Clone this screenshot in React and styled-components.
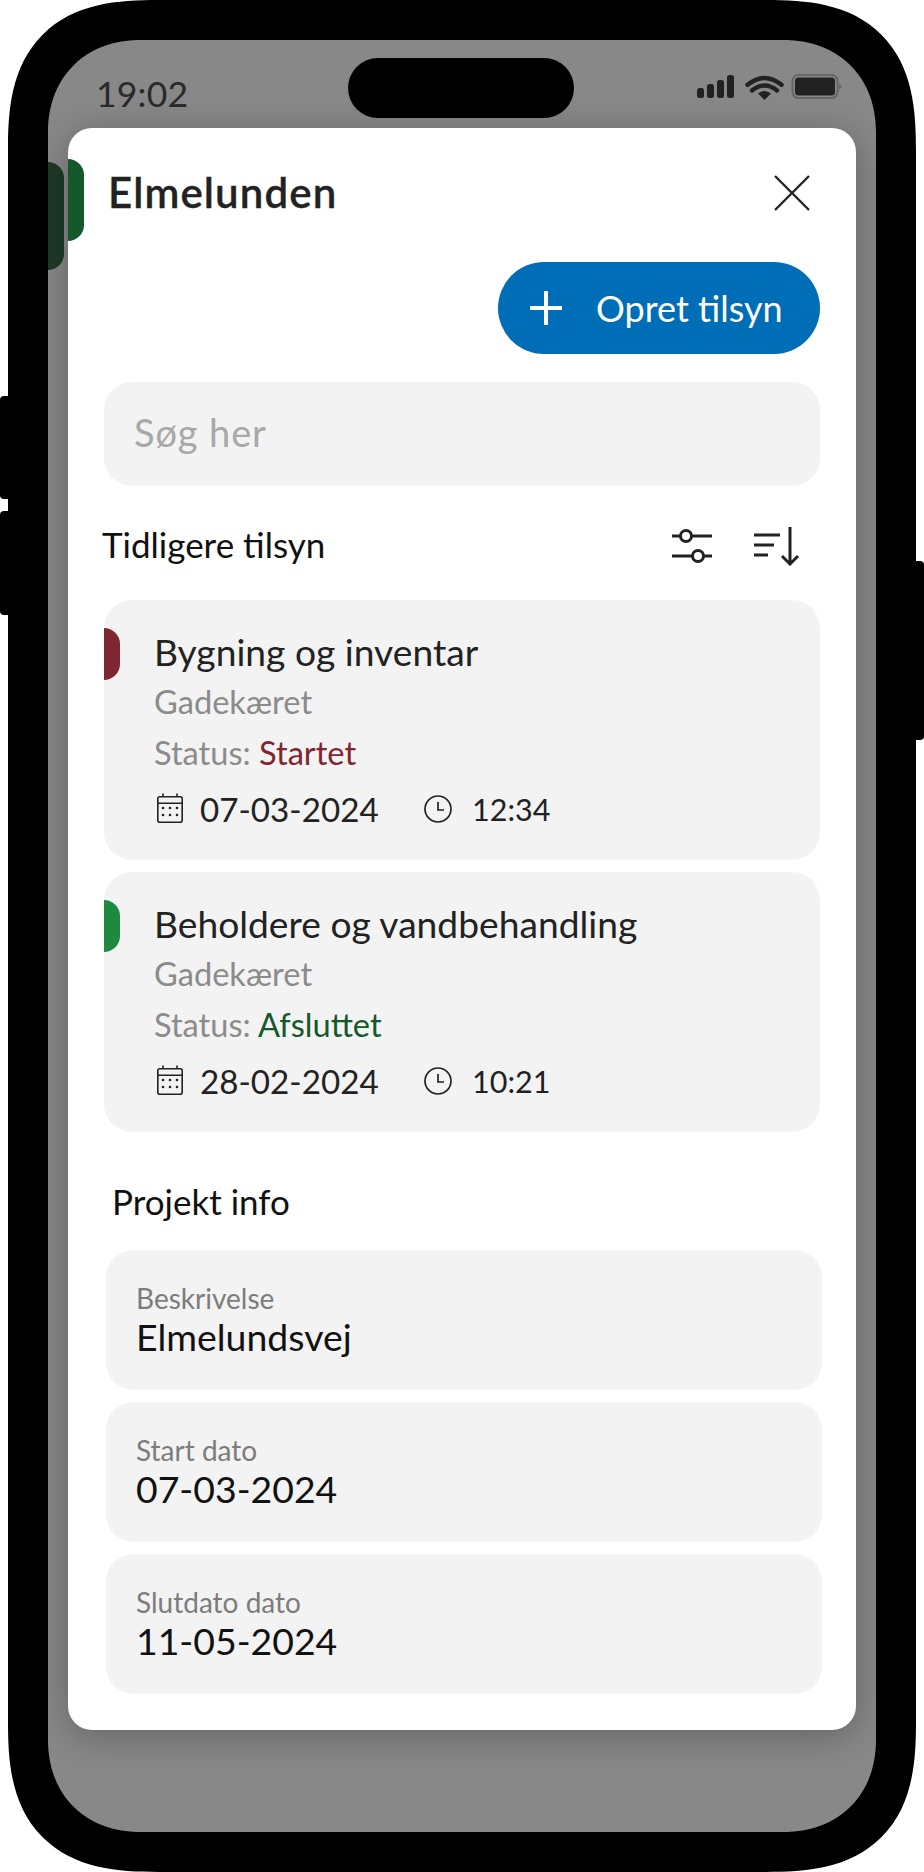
import React from "react";
import styled, { createGlobalStyle } from "styled-components";

const Global = createGlobalStyle`
  html, body { margin: 0; padding: 0; background: #fff; }
  body { font-family: "Lato", "Open Sans", sans-serif; }
  * { box-sizing: border-box; }
`;

const Stage = styled.div`
  position: relative;
  width: 924px;
  height: 1872px;
  padding: 0 8px;
  overflow: hidden;
`;
const SideKey = styled.div`
  position: absolute;
  top: ${(p) => p.$top}px;
  height: ${(p) => p.$h}px;
  width: 12px;
  background: #000;
  border-radius: 4px;
  ${(p) => (p.$right ? "right: 0;" : "left: 0;")}
`;
const Phone = styled.div`
  width: 908px;
  height: 1872px;
  background: #000;
  border-radius: 150px;
  corner-shape: superellipse(1.4);
  padding: 40px;
`;
const Screen = styled.div`
  position: relative;
  width: 828px;
  height: 1792px;
  background: #888888;
  border-radius: 92px;
  corner-shape: superellipse(1.1);
  padding: 0 20px;
  display: flex;
  flex-direction: column;
`;
const StatusBar = styled.div`
  height: 88px;
  flex: none;
  display: flex;
  align-items: flex-start;
  justify-content: space-between;
  padding: 34px 14px 0 28px;
`;
const Clock = styled.div`
  font-size: 35.5px;
  line-height: 40px;
  color: #2a2a2a;
  letter-spacing: 0.2px;
`;
const Island = styled.div`
  position: absolute;
  left: 300px;
  top: 18px;
  width: 226px;
  height: 60px;
  border-radius: 30px;
  background: #000;
`;
const StatusIcons = styled.svg`
  display: block;
`;
const BackTab = styled.div`
  position: absolute;
  left: 0;
  top: 122px;
  width: 16px;
  height: 108px;
  background: #1c3a25;
  border-radius: 0 16px 16px 0;
`;
const Sheet = styled.div`
  position: relative;
  width: 788px;
  height: 1602px;
  background: #fff;
  border-radius: 24px;
  padding: 0 36px;
  box-shadow: 0 6px 36px rgba(0, 0, 0, 0.28);
`;
const SheetTab = styled.div`
  position: absolute;
  left: 0;
  top: 31px;
  width: 16px;
  height: 82px;
  background: #14582c;
  border-radius: 0 16px 16px 0;
`;
const Header = styled.div`
  height: 134px;
  display: flex;
  align-items: flex-start;
  justify-content: space-between;
  padding: 38px 9px 0 4px;
`;
const Title = styled.h1`
  margin: 0;
  font-size: 42px;
  line-height: 52px;
  font-weight: 600;
  color: #222;
  letter-spacing: 1.1px;
  -webkit-text-stroke: 0.3px #222;
`;
const CloseBtn = styled.svg`
  display: block;
  margin-top: 8px;
`;
const ActionRow = styled.div`
  display: flex;
  justify-content: flex-end;
`;
const CreateBtn = styled.button`
  width: 322px;
  height: 92px;
  border: 0;
  border-radius: 46px;
  background: #006eb7;
  color: #fff;
  display: flex;
  align-items: center;
  gap: 34px;
  padding: 0 0 0 32px;
  font-family: inherit;
  font-size: 36px;
`;
const Search = styled.div`
  margin-top: 28px;
  height: 104px;
  border-radius: 28px;
  background: #f3f3f3;
  display: flex;
  align-items: center;
  padding: 0 0 4px 30px;
  font-size: 38px;
  letter-spacing: 0.9px;
  color: #a8a8a8;
`;
const SectionRow = styled.div`
  height: 114px;
  display: flex;
  align-items: center;
  justify-content: space-between;
  padding: 6px 20px 0 0;
  margin-left: -2px;
`;
const SectionTitle = styled.h2`
  margin: 0 0 4px;
  font-size: 35px;
  font-weight: 400;
  color: #111;
`;
const ToolIcons = styled.div`
  display: flex;
  align-items: center;
  gap: 41px;
`;
const CardList = styled.div`
  display: flex;
  flex-direction: column;
  gap: 12px;
`;
const Card = styled.div`
  position: relative;
  height: 260px;
  border-radius: 28px;
  background: #f3f3f3;
  padding: 27px 0 0 50px;
`;
const Marker = styled.span`
  position: absolute;
  left: 0;
  top: 28px;
  width: 16px;
  height: 52px;
  background: ${(p) => p.$color};
  border-radius: 0 16px 16px 0;
`;
const CardTitle = styled.div`
  font-size: 37.2px;
  line-height: 50px;
  color: #222;
`;
const CardSub = styled.div`
  font-size: 32.6px;
  line-height: 50px;
  color: #8b8b8b;
`;
const StatusLine = styled(CardSub)`
  margin-top: 1px;
`;
const Status = styled.span`
  color: ${(p) => p.$color};
`;
const MetaRow = styled.div`
  display: flex;
  align-items: center;
  font-size: 33.2px;
  line-height: 60px;
  color: #222;
  margin: 1px 0 0 3px;
`;
const DateText = styled.span`
  margin-left: 17px;
  width: 224px;
`;
const TimeText = styled.span`
  margin-left: 20px;
  font-size: 30.5px;
`;
const ProjectTitle = styled.h2`
  margin: 0;
  height: 118px;
  padding: 45px 0 0 8px;
  font-size: 35px;
  line-height: 48px;
  font-weight: 400;
  color: #111;
`;
const InfoList = styled.div`
  display: flex;
  flex-direction: column;
  gap: 12px;
  margin: 0 -2px 0 2px;
`;
const InfoCard = styled.div`
  height: 140px;
  border-radius: 28px;
  background: #f3f3f3;
  padding: 33px 0 0 30px;
`;
const InfoLabel = styled.div`
  font-size: 28px;
  line-height: 30px;
  color: #7c7c7c;
`;
const InfoValue = styled.div`
  font-size: 37.4px;
  line-height: 48px;
  color: #111;
`;

const StatusGlyphs = () => (
  <StatusIcons width="145" height="28" viewBox="0 0 145 28">
    <g fill="#222">
      <rect x="0" y="14" width="7" height="10" rx="2.5" />
      <rect x="10" y="10" width="7" height="14" rx="2.5" />
      <rect x="20" y="6" width="7" height="18" rx="2.5" />
      <rect x="30" y="1" width="7" height="23" rx="2.5" />
      <path d="M67.5 26 L61 19.5 Q67.5 14.5 74 19.5 Z" />
    </g>
    <path d="M55 14.5 Q67.5 4.5 80 14.5 M50.5 8.8 Q67.5 -5 84.5 8.8" transform="translate(0 2)" fill="none" stroke="#222" strokeWidth="4.4" strokeLinecap="round" />
    <rect x="95.5" y="1" width="45" height="23" rx="6" fill="none" stroke="#666" strokeWidth="2" />
    <rect x="98" y="3.5" width="40" height="18" rx="3.5" fill="#222" />
    <path d="M142 9 L145 12.5 L142 16 Z" fill="#666" />
  </StatusIcons>
);

const CalendarIcon = () => (
  <svg width="26" height="30" viewBox="0 0 26 30" fill="none" stroke="#222" strokeWidth="1.6" style={{ display: "block", marginTop: "-2px" }}>
    <rect x="0.8" y="3.8" width="24.4" height="25.4" rx="2" />
    <path d="M0.8 10.2 H25.2 M6 0.5 V3.8 M20 0.5 V3.8" />
    <g fill="#222" stroke="none">
      {[6, 13, 20].map((x) => [15, 22].map((y) => <circle key={`${x}${y}`} cx={x} cy={y} r="1.3" />))}
    </g>
  </svg>
);
const ClockIcon = () => (
  <svg width="28" height="28" viewBox="0 0 28 28" fill="none" stroke="#222" strokeWidth="1.7" style={{ display: "block" }}>
    <circle cx="14" cy="14" r="13" />
    <path d="M14 7 V15 H20" />
  </svg>
);

const Item = ({ title, status, statusColor, marker, date, time }) => (
  <Card>
    <Marker $color={marker} />
    <CardTitle>{title}</CardTitle>
    <CardSub>Gadekæret</CardSub>
    <StatusLine>
      Status: <Status $color={statusColor}>{status}</Status>
    </StatusLine>
    <MetaRow>
      <CalendarIcon />
      <DateText>{date}</DateText>
      <ClockIcon />
      <TimeText>{time}</TimeText>
    </MetaRow>
  </Card>
);

export default function App() {
  return (
    <Stage>
      <Global />
      <SideKey $top={396} $h={103} />
      <SideKey $top={511} $h={104} />
      <SideKey $right $top={561} $h={179} />
      <Phone>
        <Screen>
          <StatusBar>
            <Clock>19:02</Clock>
            <StatusGlyphs />
          </StatusBar>
          <Island />
          <BackTab />
          <Sheet>
            <SheetTab />
            <Header>
              <Title>Elmelunden</Title>
              <CloseBtn width="38" height="38" viewBox="0 0 38 38" fill="none" stroke="#222" strokeWidth="2.4">
                <path d="M2 2 L36 36 M36 2 L2 36" />
              </CloseBtn>
            </Header>
            <ActionRow>
              <CreateBtn>
                <svg width="32" height="34" viewBox="0 0 32 34" fill="none" stroke="#fff" strokeWidth="4">
                  <path d="M16 0 V34 M0 17 H32" />
                </svg>
                Opret tilsyn
              </CreateBtn>
            </ActionRow>
            <Search>Søg her</Search>
            <SectionRow>
              <SectionTitle>Tidligere tilsyn</SectionTitle>
              <ToolIcons>
                <svg width="42" height="36" viewBox="0 0 42 36" fill="none" stroke="#222" strokeWidth="3">
                  <path d="M1 8 H9 M21 8 H41 M1 28 H21 M33 28 H41" />
                  <circle cx="15" cy="8" r="5.5" />
                  <circle cx="27" cy="28" r="5.5" />
                </svg>
                <svg width="46" height="40" viewBox="0 0 46 40" fill="none" stroke="#222" strokeWidth="3">
                  <path d="M0 9 H26 M0 19 H20 M0 29 H14 M36 1 V38 M28 30 L36 38 L44 30" />
                </svg>
              </ToolIcons>
            </SectionRow>
            <CardList>
              <Item title="Bygning og inventar" status="Startet" statusColor="#7f2730" marker="#7f2730" date="07-03-2024" time="12:34" />
              <Item title="Beholdere og vandbehandling" status="Afsluttet" statusColor="#14582c" marker="#1f8a3f" date="28-02-2024" time="10:21" />
            </CardList>
            <ProjectTitle>Projekt info</ProjectTitle>
            <InfoList>
              <InfoCard>
                <InfoLabel>Beskrivelse</InfoLabel>
                <InfoValue>Elmelundsvej</InfoValue>
              </InfoCard>
              <InfoCard>
                <InfoLabel>Start dato</InfoLabel>
                <InfoValue>07-03-2024</InfoValue>
              </InfoCard>
              <InfoCard>
                <InfoLabel>Slutdato dato</InfoLabel>
                <InfoValue>11-05-2024</InfoValue>
              </InfoCard>
            </InfoList>
          </Sheet>
        </Screen>
      </Phone>
    </Stage>
  );
}
